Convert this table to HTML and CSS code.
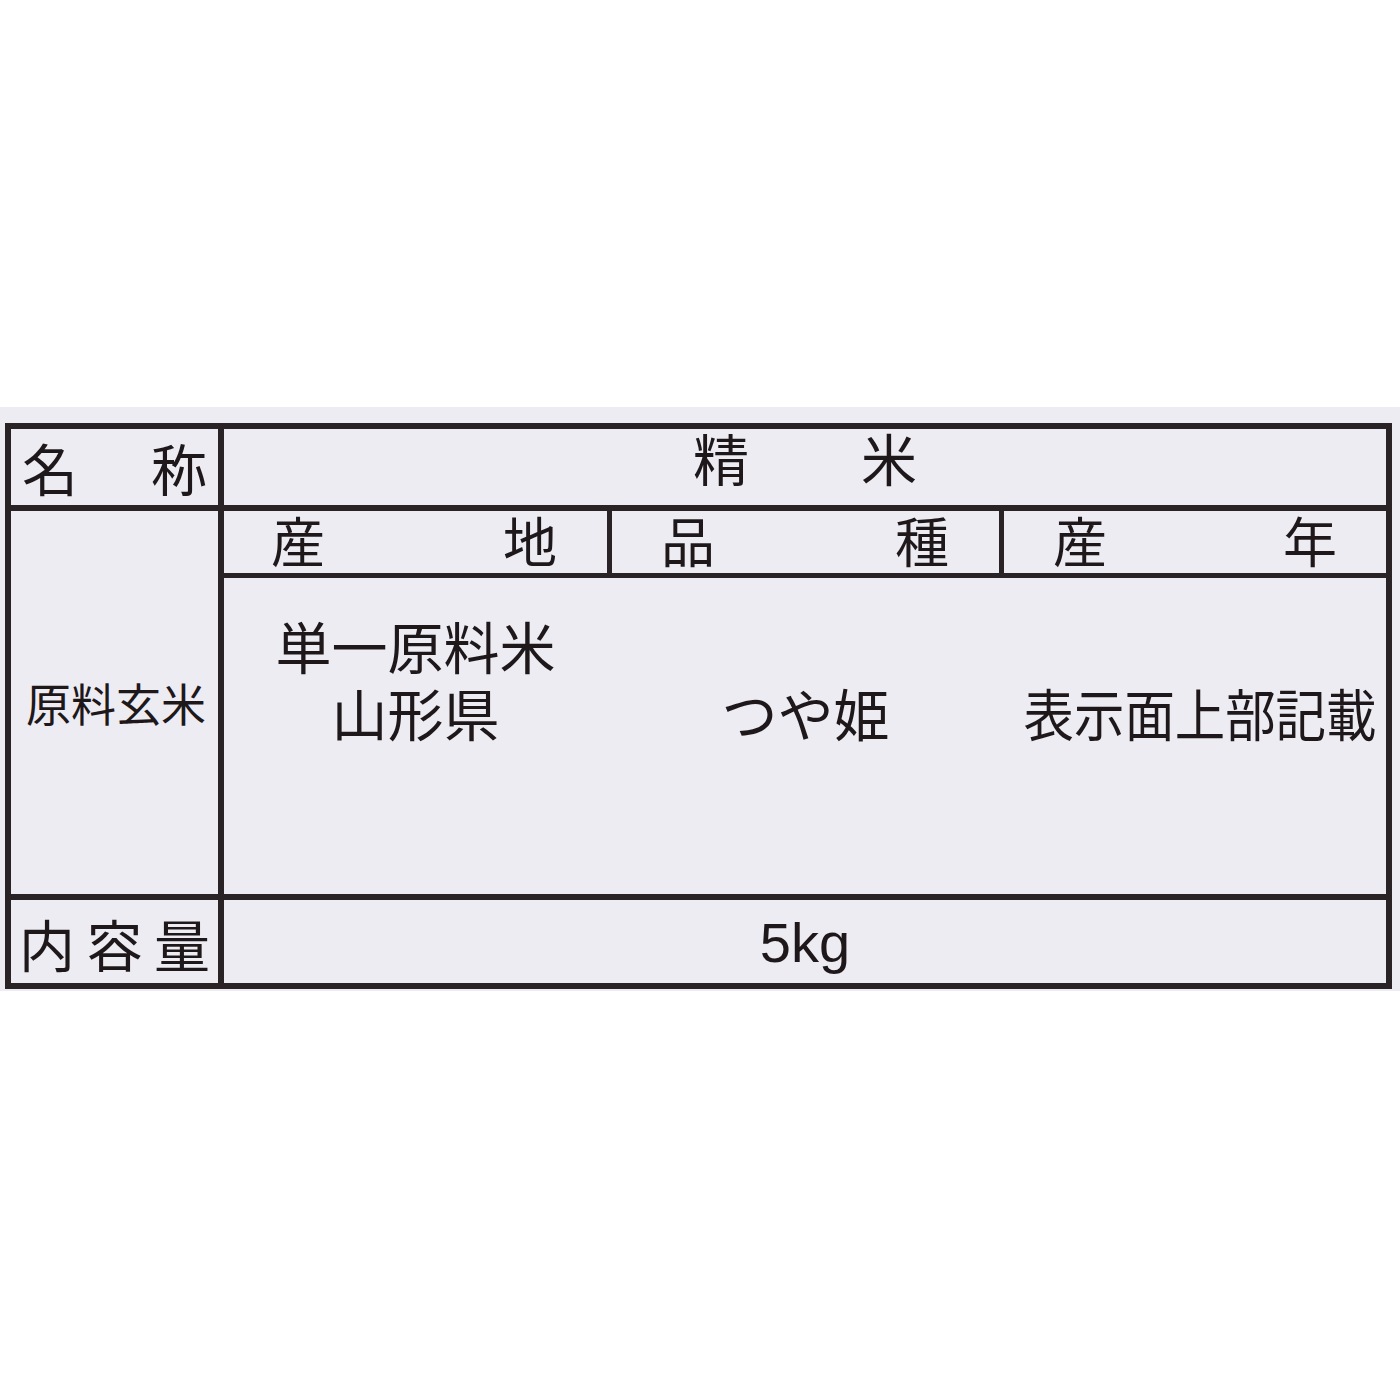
FILE: index.html
```html
<!DOCTYPE html>
<html lang="ja">
<head>
<meta charset="utf-8">
<title>精米 表示</title>
<link rel="stylesheet" href="styles.css">
</head>
<body>
<div class="label">
  <div class="tbl">
    <div class="row r-name">
      <div class="head just h-name"><span>名</span><span>称</span></div>
      <div class="val v-name">精　　米</div>
    </div>
    <div class="row r-src">
      <div class="head just h-src"><span>原</span><span>料</span><span>玄</span><span>米</span></div>
      <div class="val v-src">
        <div class="sub">
          <div class="subcell c1 just"><span>産</span><span>地</span></div>
          <div class="subcell c2 just"><span>品</span><span>種</span></div>
          <div class="subcell c3 just"><span>産</span><span>年</span></div>
        </div>
        <div class="data">
          <div class="dcol c1"><p class="lines">単一原料米<br>山形県</p></div>
          <div class="dcol c2"><p class="lines low">つや姫</p></div>
          <div class="dcol c3"><p class="lines low"><span class="cond">表示面上部記載</span></p></div>
        </div>
      </div>
    </div>
    <div class="row r-qty">
      <div class="head just h-qty"><span>内</span><span>容</span><span>量</span></div>
      <div class="val v-qty">5kg</div>
    </div>
  </div>
</div>
</body>
</html>
```

FILE: styles.css
```css
html, body {
  margin: 0;
  padding: 0;
  background: #ffffff;
}

body {
  font-family: "Noto Sans CJK JP", "Noto Sans", sans-serif;
  color: #1f181b;
}

.label {
  margin-top: 407px;
  height: 584px;
  box-sizing: border-box;
  padding: 16px 0 0 5px;
  background: #edecf3;
}

.tbl {
  width: 1387px;
  box-sizing: border-box;
  border: 6px solid #2a2326;
}

.row {
  display: flex;
  border-bottom: 6px solid #2a2326;
}

.row:last-child {
  border-bottom: none;
}

.r-name { height: 76px; }
.r-src { height: 383px; }
.r-qty { height: 83px; }

.head {
  width: 213px;
  flex: none;
  box-sizing: border-box;
  border-right: 6px solid #2a2326;
  font-size: 56px;
  font-weight: 400;
}

.just {
  display: flex;
  justify-content: space-between;
  align-items: center;
  line-height: 1;
}

.h-name { padding: 0 11px 0 11px; }
.h-src { padding: 0 13px 0 15px; font-size: 45px; }
.h-qty { padding: 0 8px 0 8px; font-size: 56px; padding-top: 2px; }

.val {
  flex: 1;
  font-size: 56px;
  font-weight: 400;
}

.v-name {
  display: flex;
  align-items: center;
  justify-content: center;
  padding-bottom: 20px;
  line-height: 1;
}

.v-src {
  display: flex;
  flex-direction: column;
}

.sub {
  display: flex;
  height: 67px;
  box-sizing: border-box;
  border-bottom: 5px solid #2a2326;
}

.c1 { width: 388px; }
.c2 { width: 392px; }
.c3 { width: 382px; }

.subcell {
  box-sizing: border-box;
  font-size: 54px;
  border-right: 5px solid #2a2326;
  padding: 0 50px 4px 47px;
}

.subcell.c2 { padding: 0 50px 4px 49px; }
.subcell.c3 { border-right: none; padding: 0 49px 4px 49px; }

.data {
  display: flex;
  padding-top: 33px;
}

.dcol {
  box-sizing: border-box;
  border-right: 5px solid transparent;
  text-align: center;
}

.dcol.c3 { border-right: none; }

.lines {
  margin: 0;
  line-height: 67px;
  white-space: nowrap;
}

.lines.low {
  margin-top: 67px;
}

.cond {
  display: inline-block;
  transform: scaleX(0.9);
}

.v-qty {
  display: flex;
  align-items: center;
  justify-content: center;
  font-family: "Liberation Sans", "Noto Sans CJK JP", sans-serif;
  font-size: 56px;
  font-weight: 400;
  padding-top: 2px;
  line-height: 1;
}
```
